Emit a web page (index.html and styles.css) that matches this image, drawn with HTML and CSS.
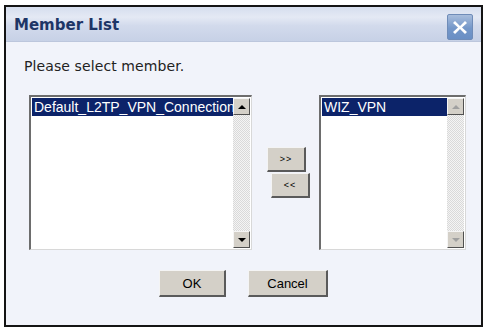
FILE: index.html
```html
<!DOCTYPE html>
<html>
<head>
<meta charset="utf-8">
<link rel="stylesheet" href="styles.css">
</head>
<body>
<div class="dialog">
  <div class="titlebar">
    <span class="title">Member List</span>
    <span class="close">
      <svg width="22" height="22" viewBox="0 0 22 22"><path d="M6 5 L11 10 L16 5 L18 7 L13 11.5 L18 16 L16 18 L11 13 L6 18 L4 16 L9 11.5 L4 7 Z" fill="#fff"/></svg>
    </span>
  </div>
  <div class="body">
    <div class="prompt">Please select member.</div>
    <div class="lists">
      <div class="listbox left">
        <div class="items">
          <div class="item sel">Default_L2TP_VPN_Connection</div>
        </div>
        <div class="scroll">
          <div class="sbtn"><span class="up"></span></div>
          <div class="track"></div>
          <div class="sbtn"><span class="down"></span></div>
        </div>
      </div>
      <div class="movers">
        <button class="btn mv add">&gt;&gt;</button>
        <button class="btn mv rem">&lt;&lt;</button>
      </div>
      <div class="listbox right">
        <div class="items">
          <div class="item sel">WIZ_VPN</div>
        </div>
        <div class="scroll dis">
          <div class="sbtn"><span class="up"></span></div>
          <div class="track"></div>
          <div class="sbtn"><span class="down"></span></div>
        </div>
      </div>
    </div>
    <div class="actions">
      <button class="btn ok">OK</button>
      <button class="btn cancel">Cancel</button>
    </div>
  </div>
</div>
</body>
</html>
```
FILE: styles.css
```css
html, body { margin: 0; padding: 0; background: #fff; }
body { width: 485px; height: 330px; overflow: hidden; }
.dialog {
  margin: 5px 0 0 4px;
  width: 475px;
  height: 318px;
  border: 2px solid #141414;
  background: #f1f3fa;
  display: flex;
  flex-direction: column;
}
.titlebar {
  height: 34px;
  display: flex;
  align-items: center;
  justify-content: space-between;
  padding: 0 8px 0 8px;
  background: linear-gradient(#d6deee 0%, #e4e9f4 30%, #d2daec 55%, #c7d1e6 100%);
  border-bottom: 1px solid #bcc6dc;
}
.title {
  font-family: "DejaVu Sans", Verdana, sans-serif;
  font-weight: bold;
  font-size: 15px;
  color: #1d3566;
  margin-top: 2px;
}
.close {
  width: 24px; height: 24px;
  margin-top: 6px;
  border: 1px solid #6f8cb8;
  border-radius: 2px;
  background: linear-gradient(#a8bddc, #7497c9 55%, #6a8fc4);
  display: flex; align-items: center; justify-content: center;
}
.close svg { display: block; }
.body {
  flex: 1;
  padding: 16px 0 0 16px;
  font-family: "Liberation Sans", Arial, sans-serif;
}
.prompt {
  font-family: "DejaVu Sans", Verdana, sans-serif;
  font-size: 14px;
  color: #222;
  letter-spacing: 0.1px;
  margin-left: 2px;
}
.lists {
  display: flex;
  align-items: flex-start;
  margin-top: 21px;
  margin-left: 7px;
}
.listbox {
  display: flex;
  height: 150px;
  border-top: 2px solid #6d6d6d;
  border-left: 2px solid #6d6d6d;
  border-right: 1px solid #d8d8d8;
  border-bottom: 1px solid #d8d8d8;
  background: #fff;
  padding: 1px;
}
.listbox.left { width: 218px; }
.listbox.right { width: 142px; }
.items { flex: 1; overflow: hidden; }
.item {
  height: 18px;
  line-height: 18px;
  font-size: 14px;
  color: #000;
  padding-left: 2px;
  white-space: nowrap;
  overflow: hidden;
}
.item.sel { background: #0c2369; color: #fff; }
.scroll {
  width: 17px;
  display: flex;
  flex-direction: column;
  background-color: #ececec;
  background-image: repeating-conic-gradient(#d9d9d9 0 25%, #f4f4f4 0 50%);
  background-size: 2px 2px;
}
.track { flex: 1; }
.sbtn {
  height: 17px;
  background: #d4d0c8;
  border-top: 1px solid #f5f5f5;
  border-left: 1px solid #f5f5f5;
  border-right: 1px solid #505050;
  border-bottom: 1px solid #505050;
  box-sizing: border-box;
  display: flex; align-items: center; justify-content: center;
}
.up { width: 0; height: 0; border-left: 4px solid transparent; border-right: 4px solid transparent; border-bottom: 4px solid #000; }
.down { width: 0; height: 0; border-left: 4px solid transparent; border-right: 4px solid transparent; border-top: 4px solid #000; }
.dis .up { border-bottom-color: #a0a0a0; }
.dis .down { border-top-color: #a0a0a0; }
.movers {
  display: flex;
  flex-direction: column;
  margin: 52px 0 0 15px;
  width: 52px;
}
.btn {
  font-family: "Liberation Sans", Arial, sans-serif;
  font-size: 12px;
  color: #000;
  background: #d4d0c8;
  border-top: 1px solid #f4f4f4;
  border-left: 1px solid #f4f4f4;
  border-right: 2px solid #5a5a5a;
  border-bottom: 2px solid #5a5a5a;
  padding: 0;
  margin: 0;
}
.mv { width: 39px; height: 25px; font-size: 9px; letter-spacing: 1px; }
.mv.rem { margin: 1px 0 0 4px; }
.actions {
  display: flex;
  justify-content: center;
  gap: 22px;
  margin-top: 20px;
  padding-right: 16px;
}
.btn.ok { width: 67px; height: 27px; font-size: 13px; }
.btn.cancel { width: 80px; height: 27px; font-size: 13px; }
```
